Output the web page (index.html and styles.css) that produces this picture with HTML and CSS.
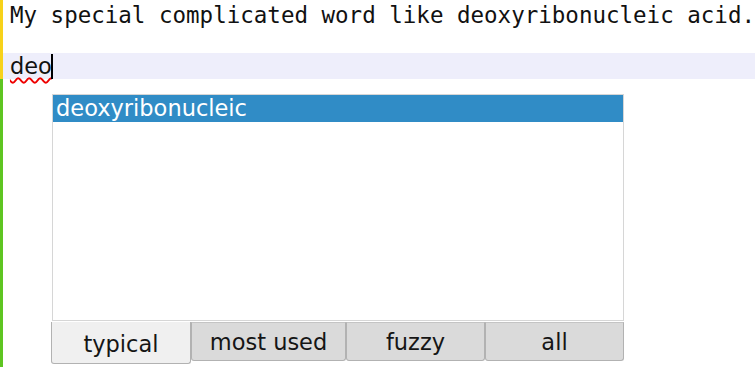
FILE: index.html
```html
<!DOCTYPE html>
<html lang="en">
<head>
  <meta charset="UTF-8">
  <title>Completion</title>
  <link rel="stylesheet" href="styles.css">
</head>
<body>

  <div class="editor">
    <div class="gutter">
      <div class="mod-saved"></div>
      <div class="mod-new"></div>
    </div>

    <div class="lines">
      <div class="line mono">My special complicated word like deoxyribonucleic acid.</div>
      <div class="line"></div>
      <div class="line current"><span class="typo">deo</span><span class="cursor"></span></div>
    </div>

    <div class="completion">
      <div class="liste">
        <div class="item selected">deoxyribonucleic</div>
      </div>
      <div class="tabs">
        <div class="tab active">typical</div>
        <div class="tab">most used</div>
        <div class="tab">fuzzy</div>
        <div class="tab">all</div>
      </div>
    </div>
  </div>

</body>
</html>
```

FILE: styles.css
```css
body {
  margin: 0;
  background: #fff;
  color: #111;
  font-family: 'DejaVu Sans', sans-serif;
  overflow: hidden;
}

.editor {
  position: relative;
  display: flex;
  height: 367px;
}

.gutter {
  width: 3px;
  display: flex;
  flex-direction: column;
}

.mod-saved {
  height: 79px;
  background: #f7d21a;
}

.mod-new {
  flex: 1;
  background: #5ec521;
}

.lines {
  flex: 1;
  padding-top: 1px;
}

.line {
  height: 26px;
  line-height: 26px;
  padding-left: 7px;
  font-size: 22.5px;
  white-space: pre;
}

.mono {
  font-family: 'DejaVu Sans Mono', monospace;
  font-size: 22.5px;
  line-height: 28px;
}

.current {
  background: #eeeefb;
  display: flex;
  align-items: center;
}

.typo {
  text-decoration: underline wavy #e00;
  text-decoration-thickness: 1.5px;
  text-underline-offset: 3px;
}

.cursor {
  display: inline-block;
  width: 2px;
  height: 25px;
  background: #000;
  margin-left: -1px;
}

/* popup de complétion */
.completion {
  position: absolute;
  left: 51px;
  top: 94px;
  width: 573px;
}

.liste {
  margin-left: 1px;
  height: 225px;
  border: 1px solid #d6d6d6;
  background: #fff;
}

.item {
  height: 27px;
  line-height: 26px;
  padding-left: 3px;
  font-size: 22.5px;
}

.selected {
  background: #308cc6;
  color: #fff;
}

.tabs {
  display: grid;
  grid-template-columns: 140px 155px 139px 139px;
  align-items: start;
  margin-top: 1px;
}

.tab {
  height: 37px;
  line-height: 39px;
  text-align: center;
  font-size: 22.5px;
  color: #151515;
  background: #dadada;
  border: 1px solid #b2b2b2;
  border-top-color: #c4c4c4;
  border-radius: 0 0 3px 3px;
}

.tab.active {
  height: 41px;
  line-height: 44px;
  background: #f0f0f0;
  border-top: none;
}
```
